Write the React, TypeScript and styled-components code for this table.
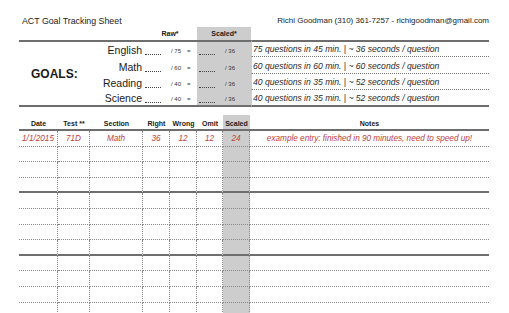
import styled, { createGlobalStyle } from 'styled-components';

const GlobalStyle = createGlobalStyle`
  html, body {
    margin: 0;
    padding: 0;
    background: #ffffff;
    overflow: hidden;
  }
  body {
    font-family: "Liberation Sans", Arial, sans-serif;
    color: #1a1a1a;
  }
`;

const goals = [
  { subject: 'English', raw: 75, note: '75 questions in 45 min. | ~ 36 seconds / question' },
  { subject: 'Math', raw: 60, note: '60 questions in 60 min. | ~ 60 seconds / question' },
  { subject: 'Reading', raw: 40, note: '40 questions in 35 min. | ~ 52 seconds / question' },
  { subject: 'Science', raw: 40, note: '40 questions in 35 min. | ~ 52 seconds / question' },
];

const headers = ['Date', 'Test **', 'Section', 'Right', 'Wrong', 'Omit', 'Scaled', 'Notes'];
const example = ['1/1/2015', '71D', 'Math', '36', '12', '12', '24', 'example entry: finished in 90 minutes, need to speed up!'];
const SCALED_COL = 6;
const ROW_COUNT = 12;

const App = () => {
  return (
    <Page>
      <GlobalStyle />
      <TopBar>
        <Title>ACT Goal Tracking Sheet</Title>
        <Contact>Richi Goodman (310) 361-7257 - richigoodman@gmail.com</Contact>
      </TopBar>

      <GoalsGrid>
        <HeadCell $col={3}>Raw*</HeadCell>
        <HeadCell $col={4} $shaded>Scaled*</HeadCell>

        <GoalsLabel>GOALS:</GoalsLabel>
        {goals.map((g, i) => {
          const row = i + 2;
          const first = i === 0;
          const last = i === goals.length - 1;
          return [
            <Subject key={g.subject + 's'} $col={2} $row={row} $first={first} $last={last}>
              {g.subject}
            </Subject>,
            <ScoreCell key={g.subject + 'r'} $col={3} $row={row} $first={first} $last={last}>
              <Blank />
              <Fraction>/ {g.raw}</Fraction>
              <Equals>=</Equals>
            </ScoreCell>,
            <ScoreCell key={g.subject + 'c'} $col={4} $row={row} $first={first} $last={last} $shaded>
              <Blank />
              <Fraction>/ 36</Fraction>
            </ScoreCell>,
            <GoalNote key={g.subject + 'n'} $col={5} $row={row} $first={first} $last={last}>
              {g.note}
            </GoalNote>,
          ];
        })}
      </GoalsGrid>

      <LogGrid>
        {headers.map((h, i) => (
          <LogHead key={h} $shaded={i === SCALED_COL}>{h}</LogHead>
        ))}
        {Array.from({ length: ROW_COUNT }).map((_, r) =>
          headers.map((h, c) => (
            <LogCell
              key={`${r}-${h}`}
              $shaded={c === SCALED_COL}
              $lastCol={c === headers.length - 1}
              $groupEnd={(r + 1) % 4 === 0}
            >
              {r === 0 ? example[c] : ''}
            </LogCell>
          ))
        )}
      </LogGrid>
    </Page>
  );
};

export default App;

const Page = styled.div`
  width: 509px;
  height: 313px;
  box-sizing: border-box;
  padding: 14px 20px 0 19px;
  overflow: hidden;
`;

const TopBar = styled.div`
  display: flex;
  justify-content: space-between;
  align-items: center;
  height: 13px;
`;

const Title = styled.div`
  font-size: 8.8px;
  padding-left: 3px;
  color: #222;
`;

const Contact = styled.div`
  font-size: 8px;
  color: #222;
`;

const GoalsGrid = styled.div`
  display: grid;
  grid-template-columns: 75px 49px 54px 54px 238px;
  grid-template-rows: 13px repeat(4, 16.75px);
`;

const HeadCell = styled.div<{ $col: number; $shaded?: boolean }>`
  grid-column: ${p => p.$col};
  grid-row: 1;
  display: flex;
  align-items: center;
  justify-content: center;
  font-size: 7px;
  font-weight: bold;
  background: ${p => (p.$shaded ? '#cdcdcd' : 'transparent')};
`;

const GoalsLabel = styled.div`
  grid-column: 1;
  grid-row: 2 / 6;
  box-sizing: border-box;
  display: flex;
  align-items: center;
  padding-left: 12px;
  font-size: 12px;
  font-weight: bold;
  border-top: 2px solid #6e6e6e;
  border-bottom: 2px solid #6e6e6e;
`;

const RowCell = styled.div<{ $col: number; $row: number; $first?: boolean; $last?: boolean; $shaded?: boolean }>`
  grid-column: ${p => p.$col};
  grid-row: ${p => p.$row};
  box-sizing: border-box;
  min-width: 0;
  border-top: ${p => (p.$first ? '2px solid #6e6e6e' : 'none')};
  border-bottom: ${p => (p.$last ? '2px solid #6e6e6e' : 'none')};
  background: ${p => (p.$shaded ? '#cdcdcd' : 'transparent')};
`;

const Subject = styled(RowCell)`
  display: flex;
  align-items: flex-end;
  justify-content: flex-end;
  font-size: 10.5px;
  line-height: 13px;
  padding-right: 1px;
  white-space: nowrap;
`;

const ScoreCell = styled(RowCell)`
  display: flex;
  align-items: flex-end;
  padding: 0 0 1px 2px;
  font-size: 6px;
  color: #333;
`;

const Blank = styled.span`
  width: 16px;
  height: 1px;
  border-bottom: 1px dotted #444;
  margin-bottom: 1px;
`;

const Fraction = styled.span`
  margin-left: 10px;
  line-height: 9px;
  white-space: nowrap;
`;

const Equals = styled.span`
  margin-left: 6px;
  line-height: 9px;
`;

const GoalNote = styled(RowCell)`
  display: flex;
  align-items: flex-end;
  padding: 0 0 2px 1px;
  font-size: 8.6px;
  font-style: italic;
  color: #2a2a2a;
  white-space: nowrap;
  border-bottom: ${p => (p.$last ? '2px solid #6e6e6e' : '1px dotted #777')};
  border-left: 1px solid #cfcfcf;
`;

const LogGrid = styled.div`
  display: grid;
  grid-template-columns: 39px 32px 53px 27px 27px 26px 27px 239px;
  grid-template-rows: 16px repeat(${ROW_COUNT}, 15.6px);
  margin-top: 8px;
`;

const LogHead = styled.div<{ $shaded?: boolean }>`
  display: flex;
  align-items: flex-end;
  justify-content: center;
  padding-bottom: 2px;
  font-size: 7px;
  font-weight: bold;
  border-bottom: 2px solid #6e6e6e;
  background: ${p => (p.$shaded ? '#cdcdcd' : 'transparent')};
`;

const LogCell = styled.div<{ $shaded?: boolean; $lastCol?: boolean; $groupEnd?: boolean }>`
  box-sizing: border-box;
  display: flex;
  align-items: center;
  justify-content: center;
  white-space: nowrap;
  font-size: 8.2px;
  font-style: italic;
  color: #c0403a;
  background: ${p => (p.$shaded ? '#cdcdcd' : 'transparent')};
  border-right: ${p => (p.$lastCol ? 'none' : '1px dotted #8a8a8a')};
  border-bottom: ${p => (p.$groupEnd ? '2px solid #6e6e6e' : '1px dotted #8a8a8a')};
`;
